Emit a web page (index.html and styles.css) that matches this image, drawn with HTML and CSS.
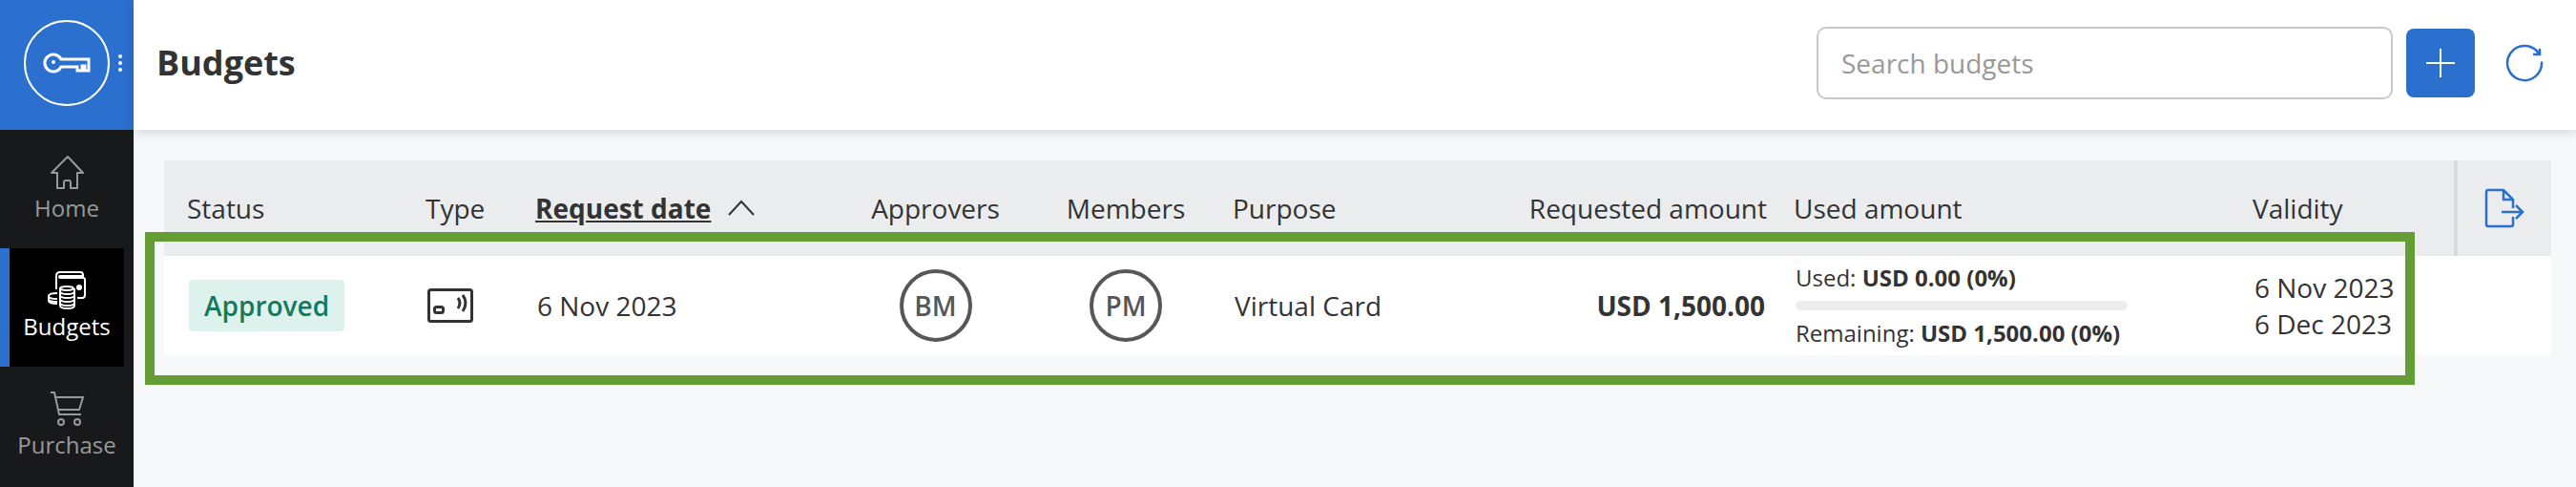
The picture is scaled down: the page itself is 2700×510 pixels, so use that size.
FILE: index.html
```html
<!DOCTYPE html>
<html lang="en">
<head>
  <meta charset="UTF-8" />
  <meta name="viewport" content="width=device-width, initial-scale=1.0"/>
  <title>Budgets</title>
  <link rel="stylesheet" href="styles.css">
</head>
<body>
  <aside class="sidebar">
    <button class="account" type="button" aria-label="Account">
      <svg width="140" height="136" viewBox="0 0 140 136" fill="none" stroke="#fff">
        <circle cx="70" cy="66" r="44" stroke-width="2"/>
        <path d="M64 62h29v12h-4v-5h-3v5h-5v-4H64a9 9 0 1 1 0-8z" stroke-width="3"/>
        <circle cx="56" cy="65" r="2" fill="#fff" stroke="none"/>
        <g fill="#fff" stroke="none">
          <circle cx="126" cy="59" r="2"/>
          <circle cx="126" cy="66" r="2"/>
          <circle cx="126" cy="73" r="2"/>
        </g>
      </svg>
    </button>
    <nav>
      <a class="nav-item" href="#home">
        <svg width="40" height="40" viewBox="0 0 40 40" fill="none" stroke="currentColor" stroke-width="2" stroke-linejoin="round">
          <path d="M21 4L4 21h6v16h7v-6q0-2 2-2h3q2 0 2 2v6h7V21h6z"/>
        </svg>
        Home
      </a>
      <a class="nav-item active" href="#budgets">
        <svg width="40" height="40" viewBox="0 0 40 40" fill="none" stroke="currentColor" stroke-width="2">
          <path d="M9 19V5q0-4 4-4h21q3 0 3 3v3M31 28h5q3 0 3-3V9q0-2-2-2"/>
          <path d="M13 6h23" stroke-width="4" stroke-linecap="round"/>
          <circle cx="33" cy="17" r="3" fill="currentColor" stroke="none"/>
          <ellipse cx="20" cy="18" rx="7" ry="2"/>
          <path d="M13 18v18c0 4 15 4 15 0V18M13 21c0 4 15 4 15 0M13 25c0 4 15 4 15 0M13 29c0 4 15 4 15 0M13 33c0 4 15 4 15 0"/>
          <path d="M10 23c-5 0-9 1-9 3v5c0 2 4 3 9 3M1 26c0 2 4 3 9 3M1 29c0 2 4 3 9 3"/>
        </svg>
        Budgets
      </a>
      <a class="nav-item" href="#purchase">
        <svg width="40" height="40" viewBox="0 0 40 40" fill="none" stroke="currentColor" stroke-width="2">
          <path d="M3 3h4l5 23h23M9 8h28l-4 13H11"/>
          <circle cx="14" cy="34" r="3"/>
          <circle cx="31" cy="34" r="3"/>
        </svg>
        Purchase
      </a>
    </nav>
  </aside>

  <main>
    <header class="topbar">
      <h1>Budgets</h1>
      <input class="search" type="text" placeholder="Search budgets" aria-label="Search budgets">
      <button class="btn-add" type="button" aria-label="Add budget">
        <svg width="32" height="32" viewBox="0 0 32 32" stroke="#fff" stroke-width="2"><path d="M16 1v30M1 16h30"/></svg>
      </button>
      <button class="btn-refresh" type="button" aria-label="Refresh">
        <svg width="40" height="40" viewBox="0 0 40 40" fill="none" stroke="#2b6fcf" stroke-width="2.500">
          <path d="M38 18.500A18 18 0 1 1 35 10M36 5v6h-7"/>
        </svg>
      </button>
    </header>

    <section class="content">
      <table class="budgets">
        <colgroup>
          <col class="col-status">
          <col class="col-type">
          <col class="col-date">
          <col class="col-approvers">
          <col class="col-members">
          <col class="col-purpose">
          <col class="col-requested">
          <col class="col-used">
          <col class="col-validity">
          <col class="col-export">
        </colgroup>
        <thead>
          <tr>
            <th>Status</th>
            <th>Type</th>
            <th class="sorted" aria-sort="ascending">
              <button type="button"><span>Request date</span>
                <svg width="28" height="18" viewBox="0 0 28 18" fill="none" stroke="currentColor" stroke-width="2"><path d="M1 16L14 2l13 14"/></svg>
              </button>
            </th>
            <th class="center">Approvers</th>
            <th class="center">Members</th>
            <th>Purpose</th>
            <th class="right">Requested amount</th>
            <th>Used amount</th>
            <th>Validity</th>
            <th class="export">
              <button type="button" aria-label="Export">
                <svg width="42" height="42" viewBox="0 0 42 42" fill="none" stroke="#2b6fcf" stroke-width="2.500">
                  <path d="M30 21v-9L20 2H4q-2 0-2 2v34q0 2 2 2h24q2 0 2-2v-8M20 2v10h10M18 25h22M33 18l7 7-7 7"/>
                </svg>
              </button>
            </th>
          </tr>
        </thead>
        <tbody>
          <tr>
            <td><span class="badge">Approved</span></td>
            <td>
              <svg class="card-icon" width="48" height="36" viewBox="0 0 48 36" fill="none" stroke="#333" stroke-width="3">
                <rect x="1.500" y="1.500" width="45" height="33" rx="2"/>
                <rect x="7.500" y="19.500" width="9" height="6" rx="2"/>
                <path d="M32 10q4 5 0 11M37 7q6 8 0 17"/>
              </svg>
            </td>
            <td>6 Nov 2023</td>
            <td class="center"><span class="avatar">BM</span></td>
            <td class="center"><span class="avatar">PM</span></td>
            <td>Virtual Card</td>
            <td class="right"><strong>USD 1,500.00</strong></td>
            <td>
              <div class="usage">
                <div>Used: <strong>USD 0.00 (0%)</strong></div>
                <div class="bar"></div>
                <div>Remaining: <strong>USD 1,500.00 (0%)</strong></div>
              </div>
            </td>
            <td>6 Nov 2023<br>6 Dec 2023</td>
            <td></td>
          </tr>
        </tbody>
      </table>
      <!-- Highlight around the budget row -->
      <div class="highlight"></div>
    </section>
  </main>
</body>
</html>
```
FILE: styles.css
```css
* {
  box-sizing: border-box;
}

body {
  font-family: "Open Sans", "Noto Sans", sans-serif;
  font-size: 28px;
  line-height: 38px;
  margin: 0;
  min-height: 100vh;
  display: flex;
  background-color: #f7f8fa;
  color: #333;
}

button {
  font: inherit;
  color: inherit;
  background: none;
  border: none;
  padding: 0;
  cursor: pointer;
}

svg {
  display: block;
}

.sidebar {
  flex: 0 0 140px;
  background-color: #18191b;
}

.account {
  display: block;
  width: 100%;
  background-color: #2b6fcf;
}

.nav-item {
  display: flex;
  flex-direction: column;
  align-items: center;
  height: 124px;
  padding-top: 24px;
  font-size: 24px;
  line-height: 36px;
  color: #999;
  text-decoration: none;
}

.nav-item.active {
  margin-right: 10px;
  border-left: 10px solid #2b6fcf;
  background-color: #000;
  color: #fff;
}

main {
  flex: 1;
  min-width: 0;
}

.topbar {
  display: flex;
  align-items: center;
  height: 136px;
  padding: 0 34px 4px 24px;
  background-color: #fff;
  box-shadow: 0 2px 12px rgba(0, 0, 0, 0.15);
}

h1 {
  flex: 1;
  margin: 0;
  font-size: 36px;
}

.search {
  width: 604px;
  height: 76px;
  padding: 0 24px;
  border: 2px solid #c8c8c8;
  border-radius: 10px;
  font: inherit;
}

.search::placeholder {
  color: #999;
}

.btn-add {
  display: flex;
  align-items: center;
  justify-content: center;
  width: 72px;
  height: 72px;
  margin: 0 32px 0 14px;
  border-radius: 8px;
  background-color: #2b6fcf;
}

.content {
  position: relative;
  padding: 32px 26px 0 32px;
}

table {
  width: 100%;
  border-collapse: collapse;
  table-layout: fixed;
}

.col-status { width: 260px; }
.col-type { width: 115px; }
.col-date { width: 332px; }
.col-approvers { width: 203px; }
.col-members { width: 196px; }
.col-requested { width: 300px; }
.col-used { width: 481px; }
.col-validity { width: 227px; }
.col-export { width: 100px; }

th {
  height: 100px;
  padding: 0 14px;
  background-color: #ebecee;
  font-weight: 400;
  text-align: left;
}

td {
  height: 104px;
  padding: 0 16px;
  background-color: #fff;
}

th:first-child {
  padding-left: 24px;
}

td:first-child {
  padding-left: 26px;
}

.center {
  text-align: center;
}

.right {
  text-align: right;
}

.sorted button {
  display: flex;
  align-items: center;
  gap: 18px;
  font-weight: 700;
}

.sorted span {
  text-decoration: underline;
}

.export {
  border-left: 4px solid #dadada;
}

.export button {
  display: block;
  margin: 0 auto;
}

.badge {
  display: inline-block;
  padding: 8px 16px;
  border-radius: 4px;
  background-color: #def2ed;
  color: #17795b;
  font-weight: 600;
}

.avatar {
  display: inline-flex;
  align-items: center;
  justify-content: center;
  width: 76px;
  height: 76px;
  border: 4px solid #555759;
  border-radius: 50%;
  color: #555759;
  font-weight: 600;
  vertical-align: middle;
}

.usage {
  display: inline-block;
  min-width: 348px;
  font-size: 24px;
  line-height: 36px;
  vertical-align: middle;
}

.bar {
  height: 10px;
  margin: 6px 0;
  border-radius: 5px;
  background-color: #ebecee;
}

.highlight {
  position: absolute;
  top: 107px;
  left: 12px;
  right: 169px;
  height: 160px;
  border: 10px solid #659d35;
  pointer-events: none;
}
```
